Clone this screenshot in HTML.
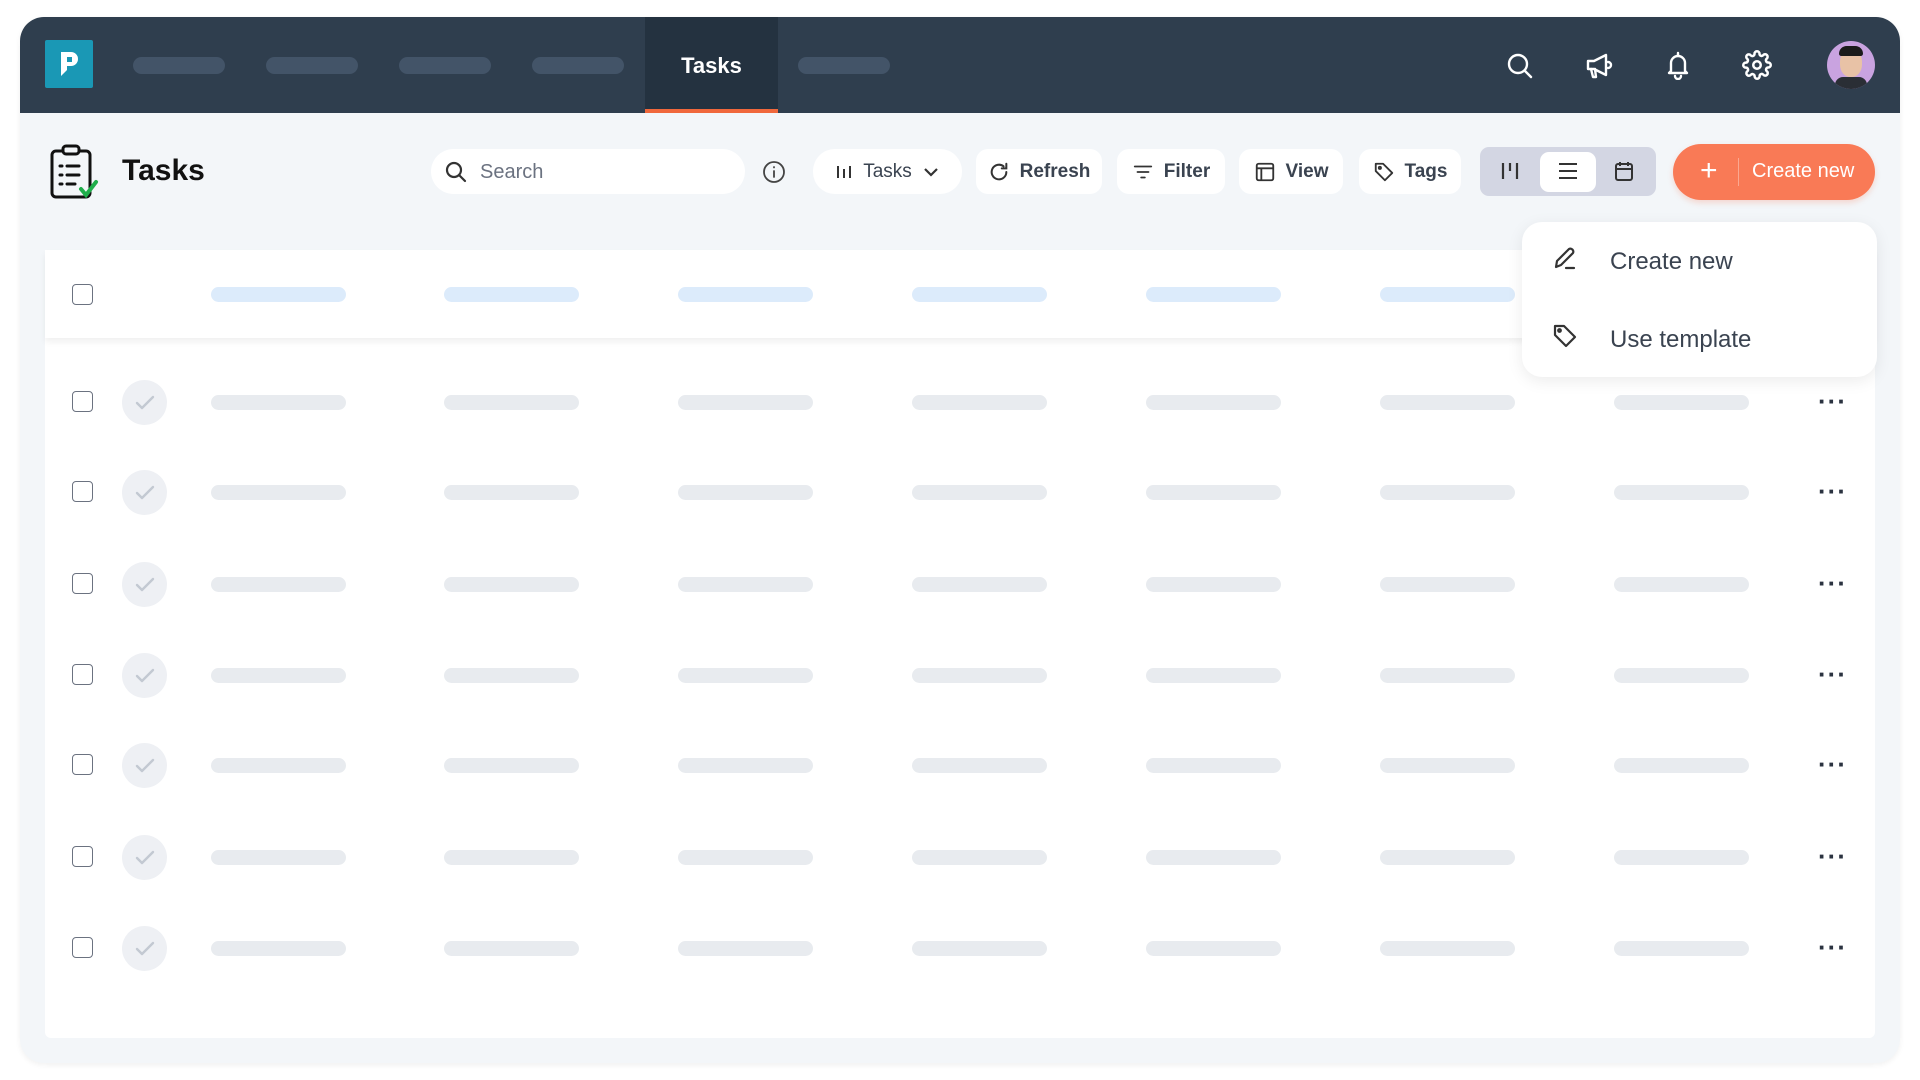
<!DOCTYPE html>
<html><head><meta charset="utf-8"><style>
*{box-sizing:border-box;margin:0;padding:0}
body{width:1920px;height:1080px;background:#fff;font-family:"Liberation Sans",sans-serif;position:relative;overflow:hidden}
.abs{position:absolute}
.panel{left:20px;top:17px;width:1880px;height:1046px;background:#f3f6f9;border-radius:24px;overflow:hidden;box-shadow:0 2px 6px rgba(0,0,0,.06)}
.hdr{left:0;top:0;width:1880px;height:96px;background:#2f3e4e}
.navp{height:17px;width:92px;border-radius:9px;background:#435468;top:40px}
.btn{background:#fff;border-radius:12px;height:45px;top:149px;display:flex;align-items:center;justify-content:center;gap:10px;font-size:19px;color:#3a4350}
.card{left:45px;top:250px;width:1830px;height:788px;background:#fff;border-radius:6px}
.cb{width:21px;height:21px;border:1.5px solid #6b7280;border-radius:4px;background:#fff}
.pill{height:15px;width:135px;border-radius:8px;background:#e8ebef}
.hp{background:#dcebfb}
.circ{width:45px;height:45px;border-radius:50%;background:#eef0f4;display:flex;align-items:center;justify-content:center}
.dots{font-size:26px;color:#2b3340;letter-spacing:1px;font-weight:bold}
</style></head><body>
<div class="abs panel">
 <div class="abs hdr"></div>
</div>
<div class="abs" style="left:45px;top:40px;width:48px;height:48px;background:#1a98b5;border-radius:2px">
 <svg width="48" height="48" viewBox="0 0 48 48"><path d="M16 12h10a7 7 0 0 1 0 14h-4v4l-6 6z" fill="#fff"/><rect x="22" y="17" width="5" height="5" fill="#1a98b5"/></svg>
</div>
<div class="abs navp" style="left:133px;top:57px"></div>
<div class="abs navp" style="left:266px;top:57px"></div>
<div class="abs navp" style="left:399px;top:57px"></div>
<div class="abs navp" style="left:532px;top:57px"></div>
<div class="abs" style="left:645px;top:17px;width:133px;height:96px;background:#243240"></div>
<div class="abs" style="left:645px;top:109px;width:133px;height:4px;background:#f0683c"></div>
<div class="abs" style="left:645px;top:53px;width:133px;text-align:center;color:#fff;font-size:22px;font-weight:bold">Tasks</div>
<div class="abs navp" style="left:798px;top:57px"></div>
<svg class="abs" style="left:1505px;top:51px" width="30" height="30" viewBox="0 0 30 30" fill="none" stroke="#fff" stroke-width="2.4" stroke-linecap="round"><circle cx="13" cy="13" r="9"/><path d="M20 20l6 6"/></svg>
<svg class="abs" style="left:1584px;top:51px" width="30" height="30" viewBox="0 0 30 30" fill="none" stroke="#fff" stroke-width="2.4" stroke-linejoin="round" stroke-linecap="round"><path d="M4 10h6l12-6v20l-12-6H4z"/><path d="M7 18l2 8h3l-1-8"/><path d="M24 11a3 3 0 0 1 0 6"/></svg>
<svg class="abs" style="left:1663px;top:50px" width="30" height="30" viewBox="0 0 30 30" fill="none" stroke="#fff" stroke-width="2.4" stroke-linejoin="round" stroke-linecap="round"><path d="M15 3v2M8 21V13a7 7 0 0 1 14 0v8l2 2H6z"/><path d="M12 26a3 3 0 0 0 6 0"/></svg>
<svg class="abs" style="left:1742px;top:50px" width="30" height="30" viewBox="0 0 24 24" fill="none" stroke="#fff" stroke-width="2" stroke-linejoin="round"><circle cx="12" cy="12" r="3"/><path d="M19.4 15a1.7 1.7 0 0 0 .3 1.8l.1.1a2 2 0 1 1-2.8 2.8l-.1-.1a1.7 1.7 0 0 0-1.8-.3 1.7 1.7 0 0 0-1 1.5V21a2 2 0 1 1-4 0v-.1a1.7 1.7 0 0 0-1.1-1.5 1.7 1.7 0 0 0-1.8.3l-.1.1a2 2 0 1 1-2.8-2.8l.1-.1a1.7 1.7 0 0 0 .3-1.8 1.7 1.7 0 0 0-1.5-1H3a2 2 0 1 1 0-4h.1a1.7 1.7 0 0 0 1.5-1.1 1.7 1.7 0 0 0-.3-1.8l-.1-.1a2 2 0 1 1 2.8-2.8l.1.1a1.7 1.7 0 0 0 1.800.3H9a1.7 1.7 0 0 0 1-1.5V3a2 2 0 1 1 4 0v.1a1.7 1.7 0 0 0 1 1.5 1.7 1.7 0 0 0 1.8-.3l.1-.1a2 2 0 1 1 2.8 2.8l-.1.1a1.7 1.7 0 0 0-.3 1.8V9a1.7 1.7 0 0 0 1.5 1H21a2 2 0 1 1 0 4h-.1a1.7 1.7 0 0 0-1.5 1z"/></svg>
<div class="abs" style="left:1827px;top:41px;width:48px;height:48px;border-radius:50%;background:#c9a3e0;overflow:hidden">
 <div class="abs" style="left:13px;top:8px;width:22px;height:28px;border-radius:45%;background:#e8c2a6"></div>
 <div class="abs" style="left:12px;top:5px;width:24px;height:10px;border-radius:10px 10px 3px 3px;background:#1b1b1b"></div>
 <div class="abs" style="left:8px;top:36px;width:32px;height:16px;border-radius:8px 8px 0 0;background:#2a2e35"></div>
</div>
<svg class="abs" style="left:49px;top:143px" width="52" height="58" viewBox="0 0 52 58" fill="none" stroke="#111" stroke-width="3" stroke-linecap="round"><rect x="3" y="8" width="38" height="46" rx="4"/><rect x="14" y="3" width="16" height="8" rx="3" fill="#f3f6f9"/><path d="M11 23h2M18 23h12M11 32h2M18 32h12M11 41h2M18 41h8"/><path d="M32 46l5 6 10-13" stroke="#1fae4b" stroke-width="4"/></svg>
<div class="abs" style="left:122px;top:154px;font-size:30px;color:#111;font-weight:600">Tasks</div>
<div class="abs" style="left:431px;top:149px;width:314px;height:45px;background:#fff;border-radius:23px"></div>
<svg class="abs" style="left:444px;top:160px" width="24" height="24" viewBox="0 0 24 24" fill="none" stroke="#333" stroke-width="2.2" stroke-linecap="round"><circle cx="10" cy="10" r="7"/><path d="M15 15l6 6"/></svg>
<div class="abs" style="left:480px;top:161px;font-size:20px;color:#6b7280">Search</div>
<svg class="abs" style="left:762px;top:160px" width="24" height="24" viewBox="0 0 24 24" fill="none" stroke="#444" stroke-width="1.8" stroke-linecap="round"><circle cx="12" cy="12" r="10"/><path d="M12 11v6M12 7v.5"/></svg>
<div class="abs btn" style="left:813px;width:149px;border-radius:22px"><svg width="18" height="18" viewBox="0 0 18 18" stroke="#333" stroke-width="2"><path d="M3 3v12M9 6v9M15 3v12"/></svg><span>Tasks</span><svg width="18" height="18" viewBox="0 0 18 18" fill="none" stroke="#333" stroke-width="2.2"><path d="M3 6l6 6 6-6"/></svg></div>
<div class="abs btn" style="left:976px;width:126px"><svg width="22" height="22" viewBox="0 0 24 24" fill="none" stroke="#333" stroke-width="2.2" stroke-linecap="round"><path d="M20 12a8 8 0 1 1-3-6.2M20 3v5h-5"/></svg><span style="font-weight:bold">Refresh</span></div>
<div class="abs btn" style="left:1117px;width:108px"><svg width="22" height="22" viewBox="0 0 24 24" stroke="#333" stroke-width="2" stroke-linecap="round"><path d="M3 6h18M6 12h12M10 18h4"/></svg><span style="font-weight:bold">Filter</span></div>
<div class="abs btn" style="left:1239px;width:104px"><svg width="22" height="22" viewBox="0 0 24 24" fill="none" stroke="#333" stroke-width="2"><rect x="3" y="3" width="18" height="18" rx="2"/><path d="M3 8h18M8 8v13"/></svg><span style="font-weight:bold">View</span></div>
<div class="abs btn" style="left:1359px;width:102px"><svg width="22" height="22" viewBox="0 0 24 24" fill="none" stroke="#333" stroke-width="2" stroke-linejoin="round"><path d="M3 3h8l10 10-8 8L3 11z"/><circle cx="7.5" cy="7.5" r="1.2"/></svg><span style="font-weight:bold">Tags</span></div>
<div class="abs" style="left:1480px;top:147px;width:176px;height:49px;background:#d3d6e3;border-radius:9px"></div>
<div class="abs" style="left:1540px;top:152px;width:56px;height:40px;background:#fff;border-radius:9px"></div>
<svg class="abs" style="left:1499px;top:160px" width="22" height="22" viewBox="0 0 22 22" stroke="#333" stroke-width="2.2"><path d="M4 3v16M11 3v8M18 3v16"/></svg>
<svg class="abs" style="left:1556px;top:160px" width="24" height="22" viewBox="0 0 24 22" stroke="#333" stroke-width="2"><path d="M3 4h18M3 11h18M3 18h18"/></svg>
<svg class="abs" style="left:1613px;top:160px" width="22" height="22" viewBox="0 0 22 22" fill="none" stroke="#333" stroke-width="2"><rect x="3" y="4" width="16" height="16" rx="2"/><path d="M3 9h16M7 2v4M15 2v4"/></svg>
<div class="abs" style="left:1673px;top:144px;width:202px;height:56px;background:#f97a56;border-radius:28px;box-shadow:0 3px 6px rgba(249,122,86,.25)"></div>
<div class="abs" style="left:1700px;top:154px;color:#fff;font-size:30px;font-weight:300">+</div>
<div class="abs" style="left:1738px;top:158px;width:1px;height:28px;background:rgba(255,255,255,.35)"></div>
<div class="abs" style="left:1752px;top:160px;color:#fff;font-size:20px">Create new</div>
<div class="abs card"></div>
<div class="abs" style="left:45px;top:250px;width:1830px;height:88px;background:#fff;box-shadow:0 4px 6px rgba(0,0,0,.06)"></div>
<div class="abs cb" style="left:72px;top:284px"></div>
<div class="abs pill hp" style="left:211px;top:287px"></div>
<div class="abs pill hp" style="left:444px;top:287px"></div>
<div class="abs pill hp" style="left:678px;top:287px"></div>
<div class="abs pill hp" style="left:912px;top:287px"></div>
<div class="abs pill hp" style="left:1146px;top:287px"></div>
<div class="abs pill hp" style="left:1380px;top:287px"></div>
<div id="rows"></div>
<script>
var ys=[402,492,584,675,765,857,948],h='';
var xs=[211,444,678,912,1146,1380,1614];
ys.forEach(function(y){
h+='<div class="abs cb" style="left:72px;top:'+(y-11)+'px"></div>';
h+='<div class="abs circ" style="left:122px;top:'+(y-22)+'px"><svg width="22" height="22" viewBox="0 0 22 22" fill="none" stroke="#c3c9d2" stroke-width="2.4" stroke-linecap="round" stroke-linejoin="round"><path d="M3 11l5 5 11-11"/></svg></div>';
xs.forEach(function(x){h+='<div class="abs pill" style="left:'+x+'px;top:'+(y-7)+'px"></div>';});
h+='<div class="abs dots" style="left:1818px;top:'+(y-16)+'px">···</div>';
});
document.getElementById('rows').innerHTML=h;
</script>
<div class="abs" style="left:1522px;top:222px;width:355px;height:155px;background:#fff;border-radius:20px;box-shadow:0 4px 16px rgba(0,0,0,.08)"></div>
<svg class="abs" style="left:1551px;top:244px" width="28" height="28" viewBox="0 0 28 28" fill="none" stroke="#333" stroke-width="2.2" stroke-linejoin="round" stroke-linecap="round"><path d="M5 23l1-6L18 5a3 3 0 0 1 4 4L10 21z"/><path d="M15 24h8"/></svg>
<div class="abs" style="left:1610px;top:248px;font-size:24px;color:#3a4350">Create new</div>
<svg class="abs" style="left:1551px;top:322px" width="28" height="28" viewBox="0 0 28 28" fill="none" stroke="#333" stroke-width="2.2" stroke-linejoin="round"><path d="M4 4h9l11 11-9 9L4 13z"/><circle cx="8.5" cy="8.5" r="1.3"/></svg>
<div class="abs" style="left:1610px;top:326px;font-size:24px;color:#3a4350">Use template</div>
</body></html>
